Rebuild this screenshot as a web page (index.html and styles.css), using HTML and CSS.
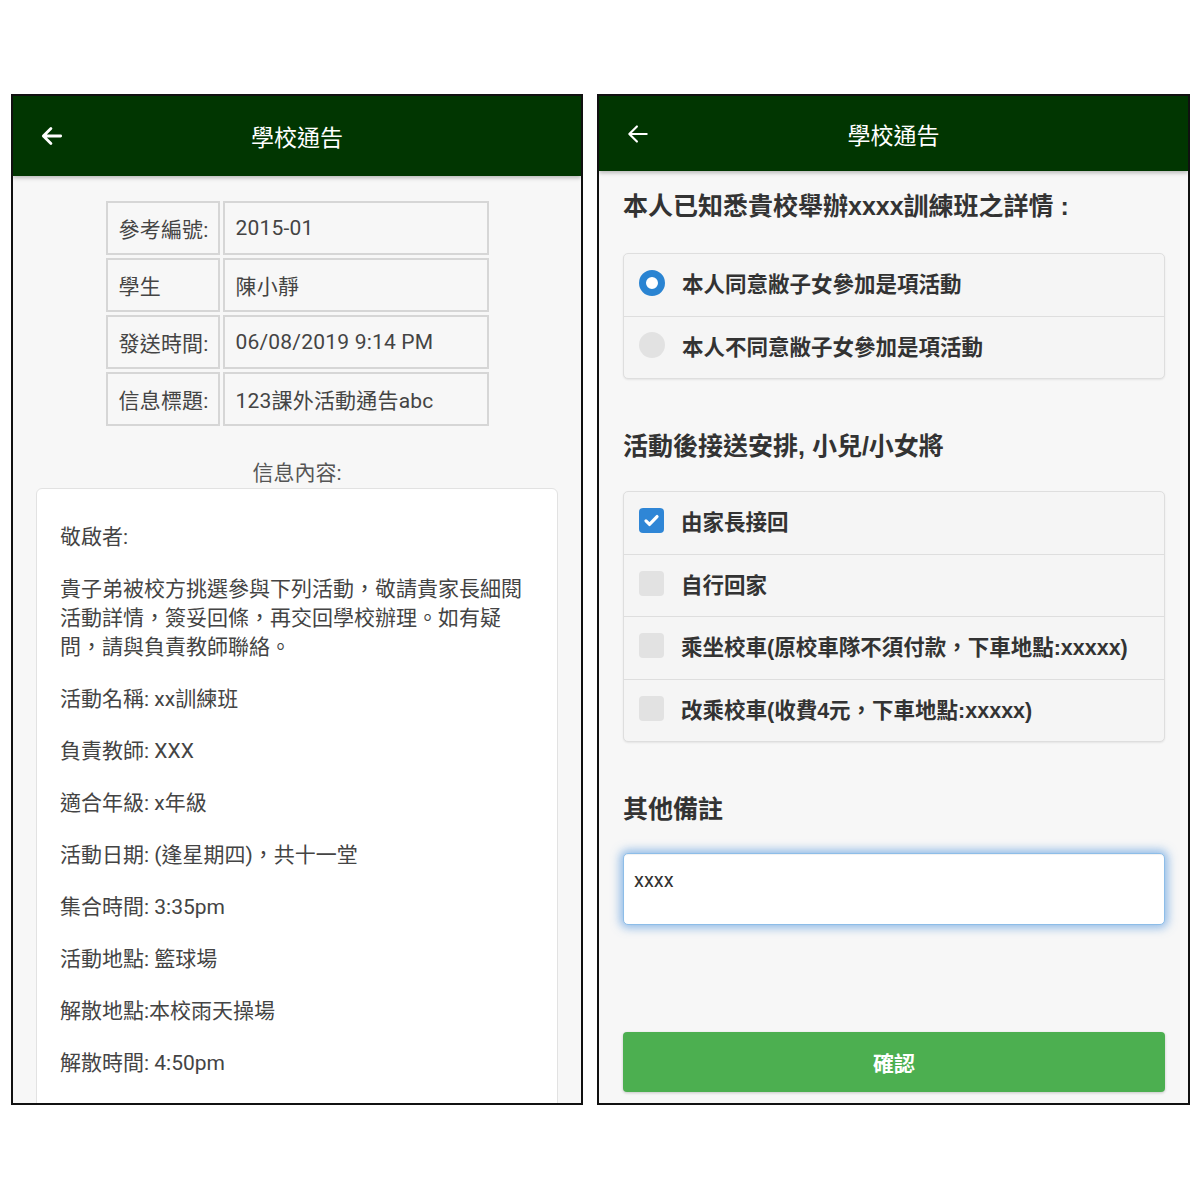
FILE: index.html
```html
<!DOCTYPE html>
<html lang="zh-Hant">
<head>
  <meta charset="UTF-8" />
  <meta name="viewport" content="width=device-width, initial-scale=1.0"/>
  <title>學校通告</title>
  <link rel="stylesheet" href="styles.css">
</head>
<body>
  <div class="screens">

    <!-- 通告內容 -->
    <div class="phone phone-left">
      <header class="bar">
        <svg class="back" viewBox="0 0 24 24" width="26" height="26"><path d="M20 12H5M11 5l-7 7 7 7" fill="none" stroke="#fff" stroke-width="2.6" stroke-linecap="round" stroke-linejoin="round"/></svg>
        <span class="bar-title">學校通告</span>
      </header>
      <div class="content">
        <div class="info">
          <div class="cell">參考編號:</div><div class="cell">2015-01</div>
          <div class="cell">學生</div><div class="cell">陳小靜</div>
          <div class="cell">發送時間:</div><div class="cell">06/08/2019 9:14 PM</div>
          <div class="cell">信息標題:</div><div class="cell">123課外活動通告abc</div>
        </div>
        <div class="msg-label">信息內容:</div>
        <div class="msg">
          <p>敬啟者:</p>
          <p>貴子弟被校方挑選參與下列活動，敬請貴家長細閱<br>活動詳情，簽妥回條，再交回學校辦理。如有疑<br>問，請與負責教師聯絡。</p>
          <p>活動名稱: xx訓練班</p>
          <p>負責教師: XXX</p>
          <p>適合年級: x年級</p>
          <p>活動日期: (逢星期四)，共十一堂</p>
          <p>集合時間: 3:35pm</p>
          <p>活動地點: 籃球場</p>
          <p>解散地點:本校雨天操場</p>
          <p>解散時間: 4:50pm</p>
        </div>
      </div>
    </div>

    <!-- 回條 -->
    <div class="phone phone-right">
      <header class="bar bar-short">
        <svg class="back" viewBox="0 0 24 24" width="26" height="26"><path d="M20 12H5M11 5l-7 7 7 7" fill="none" stroke="#fff" stroke-width="2" stroke-linecap="round" stroke-linejoin="round"/></svg>
        <span class="bar-title">學校通告</span>
      </header>
      <div class="content form">
        <h3 class="q q-first">本人已知悉貴校舉辦xxxx訓練班之詳情 :</h3>
        <div class="group">
          <div class="row"><span class="radio on"></span>本人同意敝子女參加是項活動</div>
          <div class="row"><span class="radio"></span>本人不同意敝子女參加是項活動</div>
        </div>

        <h3 class="q">活動後接送安排, 小兒/小女將</h3>
        <div class="group">
          <div class="row">
            <span class="check on"><svg viewBox="0 0 24 24" width="19" height="19"><path d="M5 12.5l4.5 4.5L19 7" fill="none" stroke="#fff" stroke-width="4" stroke-linecap="round" stroke-linejoin="round"/></svg></span>由家長接回
          </div>
          <div class="row"><span class="check"></span>自行回家</div>
          <div class="row"><span class="check"></span>乘坐校車(原校車隊不須付款，下車地點:xxxxx)</div>
          <div class="row"><span class="check"></span>改乘校車(收費4元，下車地點:xxxxx)</div>
        </div>

        <h3 class="q">其他備註</h3>
        <div class="note">xxxx</div>

        <button class="confirm">確認</button>
      </div>
    </div>

  </div>
</body>
</html>
```

FILE: styles.css
```css
body {
  margin: 0;
  background: #fff;
  font-family: Roboto, "Noto Sans CJK TC", sans-serif;
  color: #333;
}
.screens {
  display: flex;
  align-items: flex-start;
  gap: 14px;
  padding: 94px 0 0 11px;
}
.phone {
  height: 1011px;
  box-sizing: border-box;
  border: 2px solid #111;
  background: #f7f7f7;
  overflow: hidden;
  display: flex;
  flex-direction: column;
}
.phone-left { width: 572px; }
.phone-right { width: 593px; }

.bar {
  height: 80px;
  flex: none;
  background: #013601;
  display: flex;
  align-items: center;
  position: relative;
  box-shadow: 0 2px 4px rgba(0,0,0,0.25);
}
.bar-short { height: 75px; }
.back {
  margin-left: 26px;
}
.bar-title {
  position: absolute;
  left: 0;
  right: 0;
  text-align: center;
  color: #fff;
  font-size: 23px;
  pointer-events: none;
}

/* left screen */
.info {
  display: grid;
  grid-template-columns: 114px 266px;
  grid-auto-rows: 54px;
  gap: 3px;
  width: 383px;
  margin: 25px auto 0;
}
.cell {
  border: 2px solid #d6d6d6;
  display: flex;
  align-items: center;
  padding-left: 11px;
  font-size: 21px;
  letter-spacing: 0.2px;
  color: #444;
}
.msg-label {
  text-align: center;
  font-size: 21px;
  line-height: 28px;
  color: #555;
  margin-top: 33px;
  margin-bottom: 1px;
}
.msg {
  margin: 0 23px;
  background: #fff;
  border: 1px solid #e2e2e2;
  border-radius: 6px;
  padding: 11px 14px 40px 23px;
  font-size: 21px;
  line-height: 29px;
  color: #444;
}
.msg p {
  margin: 23px 0;
}

/* right screen */
.form {
  padding: 0 23px 0 24px;
  display: flex;
  flex-direction: column;
  font-family: "Liberation Sans", "Noto Sans CJK TC", sans-serif;
}
.q {
  font-size: 25px;
  line-height: 32px;
  font-weight: bold;
  color: #333;
  margin: 51px 0 29px;
}
.q-first { margin: 19px 0 31px; }
.group {
  border: 1px solid #dedede;
  border-radius: 5px;
  background: #f5f5f5;
  box-shadow: 0 1px 2px rgba(0,0,0,0.08);
}
.row {
  height: 57px;
  padding: 0 0 4.5px 15px;
  display: flex;
  align-items: center;
  font-size: 21.5px;
  font-weight: bold;
  color: #333;
}
.row + .row { border-top: 1px solid #dedede; }
.radio {
  width: 26px;
  height: 26px;
  border-radius: 50%;
  background: #e2e2e2;
  margin-right: 17px;
  box-sizing: border-box;
}
.radio.on {
  background: #fff;
  border: 7px solid #2a84d2;
}
.check {
  width: 25px;
  height: 25px;
  border-radius: 4px;
  background: #e2e2e2;
  margin-right: 17px;
  display: flex;
  align-items: center;
  justify-content: center;
}
.check.on { background: #2f86d6; }
.note {
  height: 72px;
  box-sizing: border-box;
  background: #fff;
  border: 1px solid #8dbde8;
  border-radius: 5px;
  box-shadow: 0 0 10px 3px rgba(110,165,225,0.75), inset 0 1px 1px rgba(0,0,0,0.06);
  padding: 14px 10px;
  font-family: Roboto, sans-serif;
  font-size: 20px;
  color: #333;
  margin-top: -1px;
}
.confirm {
  margin-top: 107px;
  height: 60px;
  border: none;
  border-radius: 4px;
  background: #4caf50;
  color: #fff;
  font-family: "Noto Sans CJK TC", sans-serif;
  font-size: 21px;
  font-weight: bold;
  box-shadow: 0 1px 3px rgba(0,0,0,0.2);
}
```
